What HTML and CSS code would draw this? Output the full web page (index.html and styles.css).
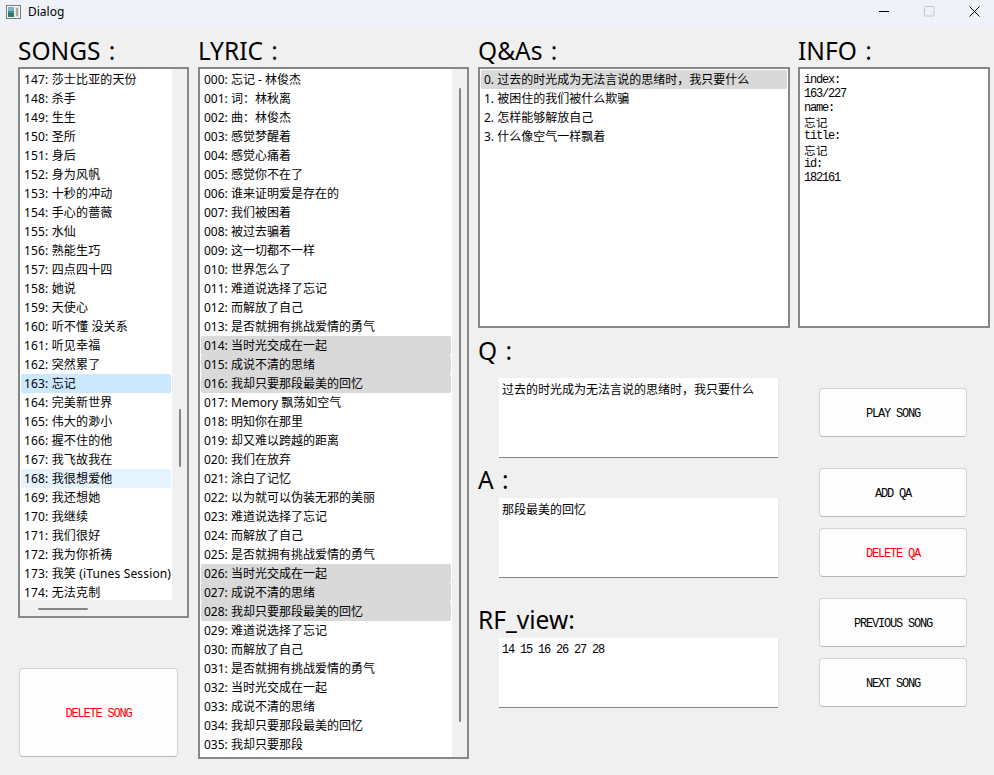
FILE: index.html
```html
<!DOCTYPE html>
<html>
<head>
<meta charset="utf-8">
<title>Dialog</title>
<link rel="stylesheet" href="styles.css">
</head>
<body>
<div class="titlebar">
  <div class="title-left">
    <svg class="app-icon" width="15" height="14" viewBox="0 0 15 14">
      <rect x="0.5" y="0.5" width="14" height="13" fill="#f4f4f4" stroke="#7a7a7a"/>
      <rect x="2" y="2" width="6" height="10" fill="#3d8f9e"/>
      <rect x="2" y="2" width="6" height="4" fill="#7fb3c9"/>
      <rect x="2" y="8" width="6" height="4" fill="#2f7a55"/>
      <rect x="9" y="2" width="4" height="10" fill="#e2e2e2"/>
      <rect x="10" y="3" width="2" height="8" fill="#a8a8a8"/>
    </svg>
    <span class="title">Dialog</span>
  </div>
  <div class="controls">
    <svg class="ctl" width="11" height="11" viewBox="0 0 11 11"><line x1="0" y1="5.5" x2="10" y2="5.5" stroke="#000" stroke-width="1"/></svg>
    <svg class="ctl" width="11" height="11" viewBox="0 0 11 11"><rect x="0.5" y="0.5" width="9.5" height="9.5" rx="1" fill="none" stroke="#c4c4c4" stroke-width="1"/></svg>
    <svg class="ctl" width="11" height="11" viewBox="0 0 11 11"><path d="M0.5 0.5 L10.5 10.5 M10.5 0.5 L0.5 10.5" stroke="#000" stroke-width="1"/></svg>
  </div>
</div>

<div class="main">
  <div class="col songs-col">
    <div class="label top-label">SONGS :</div>
    <div class="listbox songs-box">
      <div class="list-area">
        <div class="item">147: 莎士比亚的天份</div>
        <div class="item">148: 杀手</div>
        <div class="item">149: 生生</div>
        <div class="item">150: 圣所</div>
        <div class="item">151: 身后</div>
        <div class="item">152: 身为风帆</div>
        <div class="item">153: 十秒的冲动</div>
        <div class="item">154: 手心的蔷薇</div>
        <div class="item">155: 水仙</div>
        <div class="item">156: 熟能生巧</div>
        <div class="item">157: 四点四十四</div>
        <div class="item">158: 她说</div>
        <div class="item">159: 天使心</div>
        <div class="item">160: 听不懂 没关系</div>
        <div class="item">161: 听见幸福</div>
        <div class="item">162: 突然累了</div>
        <div class="item selected">163: 忘记</div>
        <div class="item">164: 完美新世界</div>
        <div class="item">165: 伟大的渺小</div>
        <div class="item">166: 握不住的他</div>
        <div class="item">167: 我飞故我在</div>
        <div class="item hover">168: 我很想爱他</div>
        <div class="item">169: 我还想她</div>
        <div class="item">170: 我继续</div>
        <div class="item">171: 我们很好</div>
        <div class="item">172: 我为你祈祷</div>
        <div class="item">173: 我笑 (iTunes Session)</div>
        <div class="item">174: 无法克制</div>
      </div>
      <div class="vgutter"><div class="vthumb songs-thumb"></div></div>
      <div class="hgutter"><div class="hthumb"></div></div>
      <div class="corner"></div>
    </div>
    <div class="btn danger del-song">DELETE SONG</div>
  </div>

  <div class="col lyric-col">
    <div class="label top-label">LYRIC :</div>
    <div class="listbox lyric-box">
      <div class="list-area">
        <div class="item">000: 忘记 - 林俊杰</div>
        <div class="item">001: 词：林秋离</div>
        <div class="item">002: 曲：林俊杰</div>
        <div class="item">003: 感觉梦醒着</div>
        <div class="item">004: 感觉心痛着</div>
        <div class="item">005: 感觉你不在了</div>
        <div class="item">006: 谁来证明爱是存在的</div>
        <div class="item">007: 我们被困着</div>
        <div class="item">008: 被过去骗着</div>
        <div class="item">009: 这一切都不一样</div>
        <div class="item">010: 世界怎么了</div>
        <div class="item">011: 难道说选择了忘记</div>
        <div class="item">012: 而解放了自己</div>
        <div class="item">013: 是否就拥有挑战爱情的勇气</div>
        <div class="item marked">014: 当时光交成在一起</div>
        <div class="item marked">015: 成说不清的思绪</div>
        <div class="item marked">016: 我却只要那段最美的回忆</div>
        <div class="item">017: Memory 飘荡如空气</div>
        <div class="item">018: 明知你在那里</div>
        <div class="item">019: 却又难以跨越的距离</div>
        <div class="item">020: 我们在放弃</div>
        <div class="item">021: 涂白了记忆</div>
        <div class="item">022: 以为就可以伪装无邪的美丽</div>
        <div class="item">023: 难道说选择了忘记</div>
        <div class="item">024: 而解放了自己</div>
        <div class="item">025: 是否就拥有挑战爱情的勇气</div>
        <div class="item marked">026: 当时光交成在一起</div>
        <div class="item marked">027: 成说不清的思绪</div>
        <div class="item marked">028: 我却只要那段最美的回忆</div>
        <div class="item">029: 难道说选择了忘记</div>
        <div class="item">030: 而解放了自己</div>
        <div class="item">031: 是否就拥有挑战爱情的勇气</div>
        <div class="item">032: 当时光交成在一起</div>
        <div class="item">033: 成说不清的思绪</div>
        <div class="item">034: 我却只要那段最美的回忆</div>
        <div class="item">035: 我却只要那段</div>
      </div>
      <div class="vgutter"><div class="vthumb lyric-thumb"></div></div>
    </div>
  </div>

  <div class="right">
    <div class="top-row">
      <div class="qa-col">
        <div class="label top-label">Q&amp;As :</div>
        <div class="listbox qa-box">
          <div class="list-area">
            <div class="item marked">0. 过去的时光成为无法言说的思绪时，我只要什么</div>
            <div class="item">1. 被困住的我们被什么欺骗</div>
            <div class="item">2. 怎样能够解放自己</div>
            <div class="item">3. 什么像空气一样飘着</div>
          </div>
        </div>
      </div>
      <div class="info-col">
        <div class="label top-label">INFO :</div>
        <div class="listbox info-box">
          <div class="info-line">index:</div>
          <div class="info-line">163/227</div>
          <div class="info-line">name:</div>
          <div class="info-line cjk">忘记</div>
          <div class="info-line">title:</div>
          <div class="info-line cjk">忘记</div>
          <div class="info-line">id:</div>
          <div class="info-line">182161</div>
        </div>
      </div>
    </div>

    <div class="bottom-row">
      <div class="edit-col">
        <div class="label q-label">Q :</div>
        <div class="textbox tall">过去的时光成为无法言说的思绪时，我只要什么</div>
        <div class="label a-label">A :</div>
        <div class="textbox tall">那段最美的回忆</div>
        <div class="label rf-label">RF_view:</div>
        <div class="textbox short mono">14 15 16 26 27 28</div>
      </div>
      <div class="btn-col">
        <div class="btn play">PLAY SONG</div>
        <div class="btn add">ADD QA</div>
        <div class="btn danger delqa">DELETE QA</div>
        <div class="btn prev">PREVIOUS SONG</div>
        <div class="btn next">NEXT SONG</div>
      </div>
    </div>
  </div>
</div>
</body>
</html>
```

FILE: styles.css
```css
* { box-sizing: border-box; }

html, body {
  margin: 0;
  padding: 0;
}

body {
  width: 994px;
  height: 775px;
  overflow: hidden;
  background: #f0f0f0;
  color: #000;
  font-family: "Noto Sans", "Noto Sans CJK SC", sans-serif;
}

/* ---------- title bar ---------- */
.titlebar {
  height: 26px;
  background: #eff3f9;
  display: flex;
  justify-content: space-between;
}

.title-left {
  height: 23px;
  display: flex;
  align-items: center;
  padding-left: 6px;
}

.app-icon { display: block; }

.title {
  margin-left: 7px;
  font-size: 12px;
  font-family: "Noto Sans", sans-serif;
}

.controls {
  height: 22px;
  display: flex;
  align-items: center;
  gap: 34px;
  padding-right: 14px;
}

.ctl { display: block; }

/* ---------- main layout ---------- */
.main {
  display: flex;
  padding-left: 18px;
  padding-top: 10px;
}

.col { display: flex; flex-direction: column; }

.songs-col { width: 171px; }
.lyric-col { width: 271px; margin-left: 9px; }
.right { margin-left: 9px; display: flex; flex-direction: column; }

.label {
  font-family: "Noto Sans", sans-serif;
  font-size: 24.5px;
  line-height: 30px;
  height: 30px;
  white-space: nowrap;
  color: #000;
  word-spacing: 2px;
}

.top-label { height: 31px; }

/* ---------- list boxes ---------- */
.listbox {
  border: 2px solid #878787;
  background: #fff;
}

.songs-box {
  height: 551px;
  display: grid;
  grid-template-columns: 152px 15px;
  grid-template-rows: 531px 16px;
}

.lyric-box {
  height: 692px;
  display: grid;
  grid-template-columns: 252px 15px;
}

.list-area {
  overflow: hidden;
  padding: 1px;
  background: #fff;
}

.item {
  height: 19px;
  line-height: 19px;
  padding-left: 3px;
  font-size: 12px;
  white-space: nowrap;
  border-radius: 2px;
}

.songs-box .item { letter-spacing: 0.15px; }

.item.selected { background: #cce8ff; }
.item.hover { background: #e5f3ff; }
.item.marked { background: #d9d9d9; }

.vgutter {
  background: #f0f0f0;
  padding-left: 7px;
}

.vthumb {
  width: 2px;
  background: #858585;
  border-radius: 1px;
}

.songs-thumb { margin-top: 340px; height: 58px; }
.lyric-thumb { margin-top: 19px; height: 634px; }

.hgutter {
  background: #f0f0f0;
  padding-top: 8px;
  padding-left: 18px;
}

.hthumb {
  width: 50px;
  height: 2px;
  background: #858585;
  border-radius: 1px;
}

.corner { background: #f0f0f0; }

/* ---------- top right ---------- */
.top-row { display: flex; }

.qa-col { width: 312px; display: flex; flex-direction: column; }
.info-col { width: 192px; margin-left: 8px; display: flex; flex-direction: column; }

.qa-box { height: 261px; }
.info-box {
  height: 261px;
  padding: 4px 4px;
}

.info-line {
  font-family: "Liberation Mono", monospace;
  font-size: 12px;
  letter-spacing: -1.2px;
  line-height: 14px;
  height: 14px;
  white-space: nowrap;
}

.info-line.cjk {
  font-family: "Noto Sans CJK SC", sans-serif;
  font-size: 11.5px;
  letter-spacing: 0.5px;
  line-height: 14px;
}

/* ---------- bottom right ---------- */
.bottom-row { display: flex; }

.edit-col { width: 312px; display: flex; flex-direction: column; }

.q-label { margin-top: 8px; }
.a-label { margin-top: 7px; }
.rf-label { margin-top: 27px; }

.textbox {
  margin-left: 21px;
  width: 279px;
  background: #fff;
  border-bottom: 1px solid #838383;
  box-shadow: 1px 0 0 #e6e6e6;
  padding: 4px 3px;
  font-family: "Noto Sans CJK SC", sans-serif;
  font-size: 12px;
  line-height: 14px;
}

.q-label + .textbox { margin-top: 12px; }
.a-label + .textbox, .rf-label + .textbox { margin-top: 3px; }

.textbox.tall { height: 80px; }
.textbox.short { height: 70px; padding-top: 5px; }

.textbox.mono {
  font-family: "Liberation Mono", monospace;
  letter-spacing: -1.2px;
}

.btn-col {
  margin-left: 29px;
  width: 148px;
  display: flex;
  flex-direction: column;
}

.btn {
  display: flex;
  align-items: center;
  justify-content: center;
  padding-top: 2px;
  background: #fdfdfd;
  border: 1px solid #d3d3d3;
  border-bottom-color: #b9b9b9;
  border-radius: 4px;
  font-family: "Liberation Mono", monospace;
  font-size: 12px;
  letter-spacing: -1.2px;
  color: #000;
  white-space: nowrap;
}

.btn.danger { color: #ff0000; }

.btn-col .btn { height: 49px; }
.play { margin-top: 60px; }
.add { margin-top: 31px; }
.delqa { margin-top: 11px; }
.prev { margin-top: 21px; }
.next { margin-top: 11px; }

.del-song {
  margin-top: 50px;
  margin-left: 1px;
  width: 159px;
  height: 89px;
}
```
